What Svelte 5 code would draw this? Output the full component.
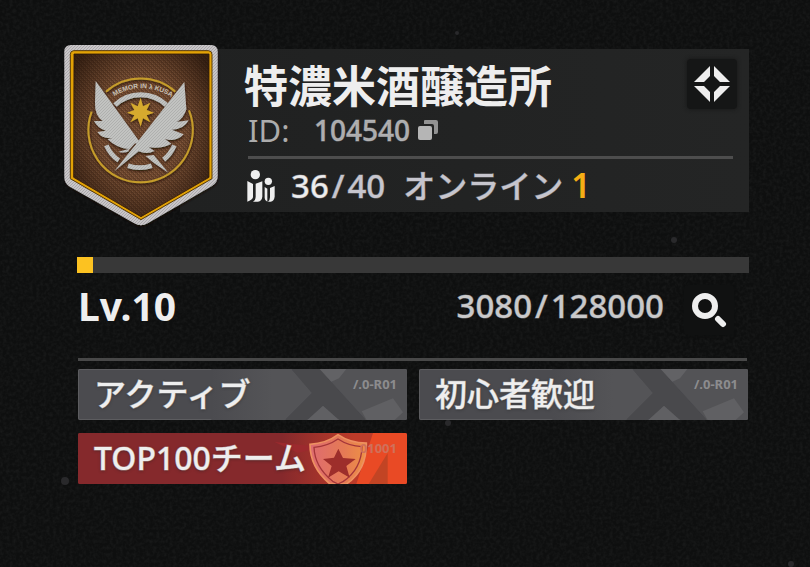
<script>
  const guild = { name: '特濃米酒醸造所', id: '104540', members: 36, capacity: 40, online: 1 };
  const level = { value: 10, xp: 3080, next: 128000 };
  const tags = [
    { label: 'アクティブ', code: '/.0-R01', top: false },
    { label: '初心者歓迎', code: '/.0-R01', top: false },
    { label: 'TOP100チーム', code: '01001', top: true }
  ];
  const progress = (level.xp / level.next) * 100;
</script>

<main>
  <svg class="grain" aria-hidden="true">
    <filter id="noise"><feTurbulence type="fractalNoise" baseFrequency="0.3" numOctaves="2" seed="4" /><feColorMatrix values="0 0 0 0 0.6  0 0 0 0 0.6  0 0 0 0 0.6  1 0 0 0 -0.35" /></filter>
    <rect width="100%" height="100%" filter="url(#noise)" opacity="0.1" />
    <g fill="#29292b">
      <circle cx="674" cy="240" r="3" /><circle cx="65" cy="481" r="4" /><circle cx="448" cy="423" r="3" />
      <circle cx="457" cy="33" r="2" /><circle cx="791" cy="564" r="3" />
    </g>
  </svg>

  <header>
    <svg class="crest" viewBox="0 0 525 600" role="img" aria-label="emblem">
      <defs>
        <pattern id="weave" width="12" height="12" patternUnits="userSpaceOnUse">
          <rect width="12" height="12" fill="#70492f" />
          <path d="M0 0h6v6H0zM6 6h6v6H6z" fill="#5e3c27" />
          <path d="M3 0h3v3H3zM9 6h3v3H9z" fill="#81593f" />
        </pattern>
        <pattern id="thread" width="9" height="9" patternUnits="userSpaceOnUse">
          <rect width="9" height="9" fill="#c9c6c8" />
          <path d="M0 0h3v3H0zM6 3h3v3H6zM3 6h3v3H3z" fill="#aaa8ab" />
        </pattern>
        <pattern id="silver" width="9" height="9" patternUnits="userSpaceOnUse">
          <rect width="9" height="9" fill="#c2c3c1" />
          <path d="M0 0h3v3H0zM6 3h3v3H6zM3 6h3v3H3z" fill="#afb0ae" />
        </pattern>
        <radialGradient id="shade" cx="50%" cy="45%" r="62%">
          <stop offset="0.5" stop-color="#1c0e06" stop-opacity="0" />
          <stop offset="1" stop-color="#1c0e06" stop-opacity="0.7" />
        </radialGradient>
        <filter id="relief" x="-10%" y="-10%" width="120%" height="120%">
          <feDropShadow dx="1" dy="4" stdDeviation="3" flood-color="#180b04" flood-opacity="0.8" />
        </filter>
        <path id="motto" d="M178 184 Q258 134 350 186" />
      </defs>
      <path d="M48 30H468Q488 30 488 50V424Q488 442 472 452L278 565Q258 577 238 565L42 454Q28 444 28 426V50Q28 30 48 30Z" fill="url(#thread)" filter="url(#relief)" />
      <path d="M56 47H460Q471 47 471 58V431L258 554L46 431V58Q46 47 56 47Z" fill="#e2a205" stroke="#583a09" stroke-width="3" />
      <path d="M57 57H462V427L258 545L56 427Z" fill="url(#weave)" stroke="#533008" stroke-width="3" />
      <path d="M57 57H462V427L258 545L56 427Z" fill="url(#shade)" />
      <g fill="none" filter="url(#relief)">
        <path d="M153 170A157 157 0 0 1 361 170M110 230A157 157 0 0 0 257 442A157 157 0 0 0 402 226" stroke="#c59c2b" stroke-width="6" />
        <path d="M180 210A112 112 0 0 1 334 210" stroke="url(#silver)" stroke-width="15" />
        <path d="M154 331A108 108 0 0 0 191 376M219 392A110 110 0 0 0 290 392M326 374A108 108 0 0 0 358 331" stroke="url(#silver)" stroke-width="14" />
      </g>
      <g filter="url(#relief)">
        <path d="M122 138L252 318L242 326L222 348Q207 356 190 350L222 342Q187 341 158 313L180 308Q144 315 127 291L153 287Q129 281 117 258L143 258Q119 241 120 203Z" fill="url(#silver)" />
        <path d="M388 141L394 223Q386 250 365 261L401 256Q386 284 350 284L386 298Q362 323 329 311L349 326Q322 342 281 337L299 348Q275 360 251 349L178 409L235 337L245 324Z" fill="url(#silver)" />
        <path d="M242 326L222 348" stroke="#523624" stroke-width="4" />
        <path d="M272 363L296 360L340 413L297 384Z" fill="url(#silver)" />
        <path d="M257 188L264 214L286 203L275 225L297 233L275 241L286 262L264 250L257 275L248 250L226 262L238 241L216 233L238 225L226 203L248 214Z" fill="#d6aa2e" />
      </g>
      <text class="motto"><textPath href="#motto">MEMOR IN λ KUSA</textPath></text>
    </svg>

    <section class="card">
      <div class="headline">
        <div>
          <h1>{guild.name}</h1>
          <p class="id"><span class="key">ID:</span><span class="medium">{guild.id}</span>
            <button class="copy" aria-label="copy">
              <svg viewBox="0 0 20 20"><path d="M7 0H18Q20 0 20 2V12Q20 14 18 14H16V6Q16 4 14 4H6V1Q6 0 7 0Z" fill="#929292" /><rect y="6" width="14" height="14" rx="2" fill="#b5b5b5" /></svg>
            </button>
          </p>
        </div>
        <button class="tile emblem" aria-label="details">
          <svg viewBox="0 0 36 36"><path d="M16 0V10L10 16H0ZM20 0V10L26 16H36ZM0 20H10L16 26V36ZM36 20H26L20 26V36Z" /></svg>
        </button>
      </div>
      <div class="stats">
        <svg viewBox="0 0 82 96"><circle cx="24" cy="14" r="14" /><circle cx="63" cy="34" r="11" /><path d="M0 33L17 42V82Q14 91 0 95ZM25 41L45 34V80Q43 94 32 95H17Q25 90 25 80ZM52 51L60 56V95Q52 92 52 84ZM68 54L82 48V80Q80 94 70 95H62Q68 90 68 82Z" /></svg>
        <span class="count medium"><b>{guild.members}</b><i>/</i>{guild.capacity}</span>
        <span class="online medium">オンライン</span>
        <span class="now">{guild.online}</span>
      </div>
    </section>
  </header>

  <section class="level">
    <div class="bar"><div class="fill" style="width: {progress}%"></div></div>
    <div class="levelrow">
      <h2>Lv.{level.value}</h2>
      <span class="xp medium">{level.xp}<i>/</i>{level.next}</span>
      <button class="tile search" aria-label="search">
        <svg viewBox="0 0 36 36"><circle cx="14" cy="14" r="10" fill="none" stroke="#eee" stroke-width="6" /><path d="M27 27L32 32" stroke="#eee" stroke-width="6" stroke-linecap="round" /></svg>
      </button>
    </div>
  </section>

  <ul class="tags">
    {#each tags as tag}
      <li class:top={tag.top}>
        {#if tag.top}
          <svg class="art" viewBox="0 0 987 153" preserveAspectRatio="xMaxYMid slice">
            <defs><linearGradient id="hot"><stop stop-color="#de6b70" /><stop offset="0.6" stop-color="#e57a55" /><stop offset="1" stop-color="#ee9145" /></linearGradient>
            <linearGradient id="ember"><stop offset="0.62" stop-color="#85292c" /><stop offset="0.84" stop-color="#bd3b29" /></linearGradient></defs>
            <path d="M0 0H987V153H0Z" fill="url(#ember)" />
            <path d="M885 0H987V153H835Z" fill="#e94a25" />
            <path d="M590 27L730 42L660 60Z" fill="#9c2a2e" />
            <path d="M929 60V153H872Z" fill="#c24424" />
            <path d="M780 5Q816 30 865 30Q866 112 805 153H756Q696 104 696 34Q746 31 780 5Z" fill="url(#hot)" stroke="#ee9161" stroke-width="5" />
            <path d="M780 18Q812 39 852 41Q850 108 796 145L780 153L764 145Q710 102 708 43Q750 39 780 18Z" fill="none" stroke="#a5363a" stroke-width="4" />
            <path d="M781 47L795 75L833 78L805 99L815 134L782 115L750 134L761 99L735 78L768 74Z" fill="#9d2e2b" />
          </svg>
        {:else}
          <svg class="art" viewBox="0 0 987 153" preserveAspectRatio="xMaxYMid slice">
            <defs><linearGradient id="steel"><stop stop-color="#4b4b4f" /><stop offset="0.6" stop-color="#545457" /></linearGradient></defs>
            <path d="M400 0H640L702 72L621 153H400Z" fill="url(#steel)" />
            <path d="M640 0H725L864 153H783L735 110L688 153H621L702 72Z" fill="#49494c" />
            <path d="M725 0H987V153H864Z" fill="#535356" />
            <path d="M725 0H805L783 28L760 38Z" fill="#626265" />
            <path d="M735 110L783 153H688Z" fill="#606063" />
            <path d="M851 127L945 88L975 130L950 153H866Z" fill="#606063" />
          </svg>
        {/if}
        <span class="label">{tag.label}</span>
        <small>{tag.code}</small>
      </li>
    {/each}
  </ul>
</main>

<style>
  :global(body) { margin: 0; background: #0e0f0f; }
  main {
    position: relative;
    box-sizing: border-box;
    min-height: 100vh;
    padding: 35px 61px 40px 55px;
    font-family: "Noto Sans", "Noto Sans CJK JP", sans-serif;
    font-weight: 500;
    color: #eee;
  }
  .grain { position: absolute; inset: 0; width: 100%; height: 100%; pointer-events: none; }
  h1, h2, p, ul { margin: 0; padding: 0; }
  i { font-style: normal; }
  button { border: 0; padding: 0; cursor: pointer; }
  header { display: flex; align-items: flex-start; }
  .crest { position: relative; z-index: 1; flex: none; width: 175px; height: 200px; }
  .motto { font: bold 20px "Liberation Sans", sans-serif; fill: #c7c0b5; }
  .medium { -webkit-text-stroke: 1px #c6c5cd70; }
  .card {
    position: relative;
    flex: 1;
    box-sizing: border-box;
    margin: 14px 0 0 -50px;
    padding: 9px 16px 4px 64px;
    background: linear-gradient(90deg, #202121, #242525);
  }
  .headline {
    display: flex;
    justify-content: space-between;
    align-items: flex-start;
    margin-left: 4px;
    padding-bottom: 10px;
    border-bottom: 3px solid #4d4d4d;
  }
  h1 { margin-left: -4px; font-size: 44px; line-height: 56px; font-weight: 700; }
  .id { display: flex; align-items: center; font-size: 28px; line-height: 32px; color: #acacac; }
  .key { width: 66px; font-size: 31px; font-weight: 400; }
  .copy { display: flex; margin-left: 8px; background: none; }
  .copy svg { width: 20px; height: 20px; }
  .tile {
    display: flex;
    align-items: center;
    justify-content: center;
    width: 50px;
    height: 50px;
    border-radius: 4px;
    background: #151616;
    box-shadow: 0 0 4px #151616;
  }
  .tile svg { width: 36px; height: 36px; fill: #eee; }
  .emblem { margin: 1px -4px 0 0; }
  .stats { display: flex; align-items: center; padding-top: 4px; font-size: 32px; line-height: 45px; color: #c6c5cd; }
  .stats svg { width: 28px; height: 32px; margin: 0 16px 0 3px; fill: #eee; }
  .stats b { font-weight: 500; color: #eee; }
  .count { font-size: 33px; }
  .count i, .xp i { margin: 0 3px; }
  .online { margin-left: 18px; }
  .now { margin-left: 8px; font-size: 34px; font-weight: 600; color: #f5ae14; }
  .level { position: relative; margin: 22px 0 0 22px; }
  .bar { height: 16px; background: #383838; }
  .fill { height: 16px; background: #fcc221; }
  .levelrow {
    display: flex;
    align-items: center;
    margin: 12px 2px 0 1px;
    padding-bottom: 23px;
    border-bottom: 3px solid #484848;
  }
  h2 { margin-bottom: 8px; font-size: 39px; line-height: 42px; font-weight: 700; }
  .xp { margin: 0 0 8px auto; font-size: 33px; line-height: 42px; color: #c9c9c9; }
  .search { margin: 0 13px 0 20px; background: #101111; box-shadow: 0 0 4px #0e0f0f; }
  .tags {
    position: relative;
    display: grid;
    grid-template-columns: 1fr 1fr;
    gap: 13px 12px;
    margin: 8px 1px 0 23px;
    list-style: none;
  }
  li {
    position: relative;
    display: flex;
    justify-content: space-between;
    height: 51px;
    padding: 0 10px 0 16px;
    box-sizing: border-box;
    overflow: hidden;
    border-radius: 2px;
    background: #4b4b4f;
    box-shadow: inset 0 0 0 1px #5c5c5f;
  }
  li.top { background: #85292c; box-shadow: none; }
  .art { position: absolute; inset: 0; width: 100%; height: 100%; }
  .label { position: relative; font-size: 32px; line-height: 50px; white-space: nowrap; -webkit-text-stroke: 1px #eeeeee70; text-shadow: 0 1px 3px #2228; }
  small { position: relative; margin-top: 6px; font: bold 13px/18px "Noto Sans", sans-serif; color: #8c8c8e; }
  .top small { color: #d0705a; }
</style>
